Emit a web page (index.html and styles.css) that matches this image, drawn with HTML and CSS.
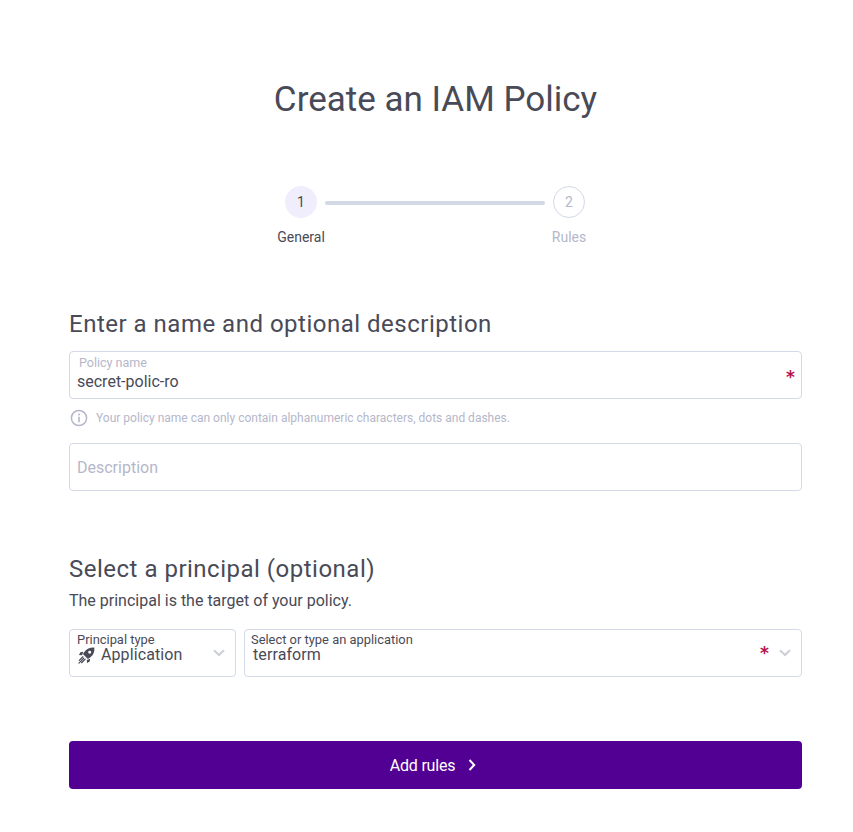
FILE: index.html
```html
<!DOCTYPE html>
<html lang="en">
<head>
<meta charset="utf-8">
<title>Create an IAM Policy</title>
<link rel="stylesheet" href="styles.css">
</head>
<body>
<main class="page">
  <h1 class="title">Create an IAM Policy</h1>
  <div class="stepper">
    <div class="step step-active"><span class="step-dot">1</span><span class="step-label">General</span></div>
    <div class="step-line"></div>
    <div class="step step-next"><span class="step-dot">2</span><span class="step-label">Rules</span></div>
  </div>

  <h2 class="heading">Enter a name and optional description</h2>
  <div class="field field-first">
    <span class="float-label muted">Policy name</span>
    <span class="value">secret-polic-ro</span>
    <span class="required">*</span>
  </div>
  <div class="hint">
    <svg class="hint-icon" viewBox="0 0 18 18" width="18" height="18" aria-hidden="true"><circle cx="9" cy="9" r="7.6" fill="none" stroke="currentColor" stroke-width="1.5"/><path d="M9 8.2v4.6" stroke="currentColor" stroke-width="1.6" stroke-linecap="round"/><circle cx="9" cy="5.6" r="1" fill="currentColor"/></svg>
    <span>Your policy name can only contain alphanumeric characters, dots and dashes.</span>
  </div>
  <div class="field field-desc"><span class="placeholder">Description</span></div>

  <h2 class="heading heading-second">Select a principal (optional)</h2>
  <p class="sub">The principal is the target of your policy.</p>
  <div class="selects">
    <div class="field select select-type">
      <span class="float-label">Principal type</span>
      <span class="value value-icon">
        <svg class="rocket" viewBox="0 0 16 16" width="17" height="17" aria-hidden="true"><path fill="currentColor" fill-rule="evenodd" d="M15.4.6c-3.8-.3-6.9 1-9.1 3.7L4.6 6.7l4.7 4.7 2.4-1.7c2.7-2.2 4-5.3 3.7-9.1zM11 3.6a1.4 1.4 0 1 1 0 2.8 1.4 1.4 0 0 1 0-2.8z"/><path fill="currentColor" d="M5 4.5 2.3 5 .9 7.5l2.9.2zM11.5 11l-.5 2.7-2.5 1.4-.2-2.9z"/><path d="M4.6 9.2 1.2 12.6M6.8 11.4 3.4 14.8M5.4 10.6.9 15.1" stroke="currentColor" stroke-width="1.1" stroke-linecap="round" fill="none"/></svg>
        Application
      </span>
      <svg class="chevron" viewBox="0 0 12 8" width="12" height="8" aria-hidden="true"><path d="M1 1.2 6 6l5-4.8" fill="none" stroke="currentColor" stroke-width="2.2"/></svg>
    </div>
    <div class="field select select-app">
      <span class="float-label">Select or type an application</span>
      <span class="value value-app">terraform</span>
      <span class="required">*</span>
      <svg class="chevron" viewBox="0 0 12 8" width="12" height="8" aria-hidden="true"><path d="M1 1.2 6 6l5-4.8" fill="none" stroke="currentColor" stroke-width="2.2"/></svg>
    </div>
  </div>

  <button class="submit" type="button">Add rules
    <svg viewBox="0 0 8 12" width="8" height="12" aria-hidden="true"><path d="M1.5 1 6.2 6l-4.7 5" fill="none" stroke="currentColor" stroke-width="2"/></svg>
  </button>
</main>
</body>
</html>
```

FILE: styles.css
```css
* { box-sizing: border-box; }
html, body { margin: 0; background: #fff; }
body { font-family: Roboto, "Noto Sans", sans-serif; color: #494a57; }
.page { padding: 75px 51px 43px 69px; display: flex; flex-direction: column; }
.title { margin: 0; font-size: 35px; line-height: 50px; font-weight: 400; text-align: center; color: #494a57; }
.stepper { display: flex; align-items: flex-start; justify-content: center; margin-top: 61px; margin-left: -1px; height: 61px; }
.step { position: relative; width: 32px; display: flex; flex-direction: column; align-items: center; }
.step-dot { width: 32px; height: 32px; border-radius: 50%; display: flex; align-items: center; justify-content: center; font-size: 14px; }
.step-label { font-size: 14px; line-height: 20px; margin-top: 9px; white-space: nowrap; }
.step-active .step-dot { background: #f0eefc; color: #494a57; }
.step-active .step-label { color: #494a57; }
.step-next .step-dot { border: 1px solid #d4d9e8; color: #b5b7ca; }
.step-next .step-label { color: #b5b7ca; }
.step-line { width: 220px; height: 4px; border-radius: 2px; background: #d4d9e8; margin: 15px 8px 0; }
.heading { margin: 61px 0 0; font-size: 24px; line-height: 33px; font-weight: 400; letter-spacing: .5px; color: #494a57; }
.heading-second { margin-top: 62px; line-height: 32px; }
.field { position: relative; border: 1px solid #d4d9e8; border-radius: 4px; height: 48px; display: flex; align-items: center; background: #fff; }
.field-first { margin-top: 10px; }
.float-label { position: absolute; left: 7px; top: 3px; font-size: 12.9px; line-height: 14px; color: #494a57; white-space: nowrap; }
.select-app .float-label { left: 6px; }
.float-label.muted { left: 9px; top: 4px; font-size: 12.5px; color: #b5b7ca; }
.value { font-size: 16px; line-height: 20px; color: #494a57; padding: 13px 0 0 7px; white-space: nowrap; }
.required { position: absolute; right: 6px; top: 13px; font-family: "DejaVu Sans", sans-serif; font-size: 17px; line-height: 24px; color: #b3144e; font-weight: 700; }
.hint { display: flex; align-items: center; gap: 8px; margin: 10px 0 0 1px; height: 18px; font-size: 12px; color: #b5b7ca; }
.hint-icon { flex: none; }
.field-desc { margin-top: 16px; }
.placeholder { font-size: 16px; color: #b5b7ca; padding-left: 7px; }
.sub { margin: 6px 0 0; font-size: 16px; line-height: 20px; color: #494a57; }
.selects { display: flex; gap: 8px; margin-top: 18px; }
.select-type { width: 167px; flex: none; }
.select-app { flex: 1; }
.value-icon { display: flex; align-items: center; gap: 6px; padding-left: 8px; padding-top: 4px; letter-spacing: .1px; color: #494a57; }
.value-app { padding-top: 4px; padding-left: 8px; letter-spacing: .1px; }
.rocket { flex: none; }
.chevron { position: absolute; right: 10px; top: 19px; color: #ced0d8; }
.select-app .required { right: 32px; top: 11px; }
.submit { margin-top: 64px; height: 48px; border: 0; border-radius: 4px; background: #520094; color: #fff; font: inherit; font-size: 16px; letter-spacing: -.2px; display: flex; align-items: center; justify-content: center; gap: 13px; padding-right: 11px; }
```
